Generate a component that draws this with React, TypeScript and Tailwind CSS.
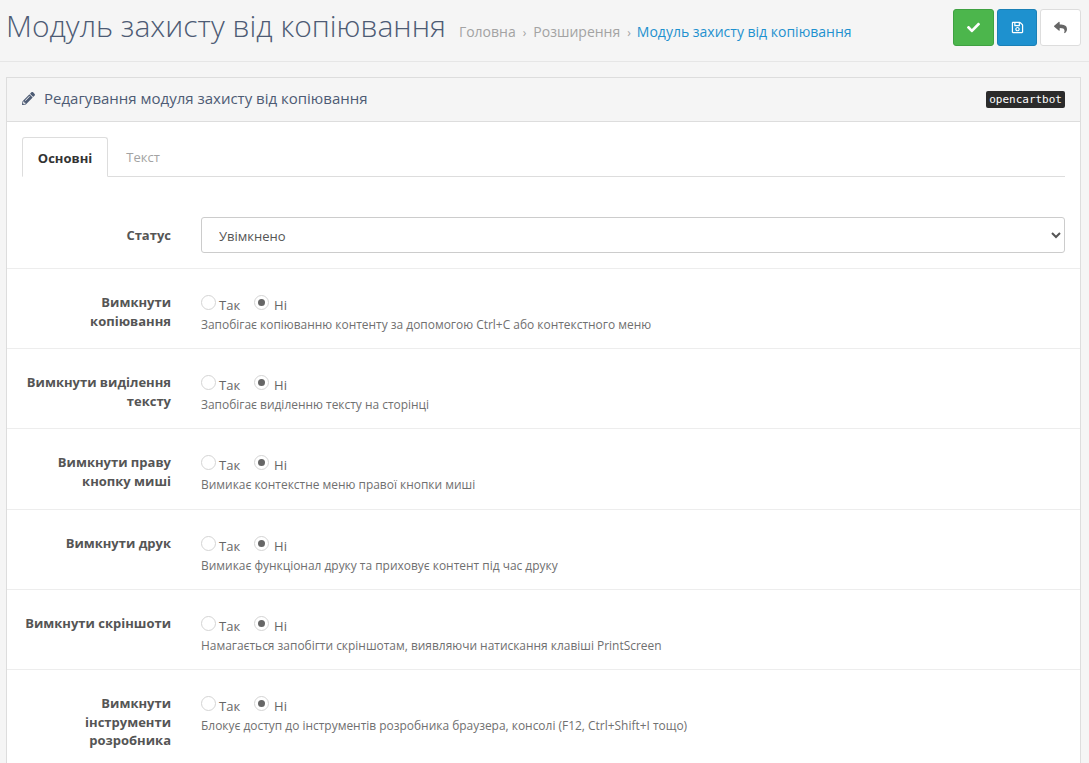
import React from 'react';
import { FaCheck, FaPencilAlt, FaRegSave, FaReply } from 'react-icons/fa';

const rows = [
    { label: ['Вимкнути', 'копіювання'], help: 'Запобігає копіюванню контенту за допомогою Ctrl+C або контекстного меню', h: 'h-[80px]' },
    { label: ['Вимкнути виділення', 'тексту'], help: 'Запобігає виділенню тексту на сторінці', h: 'h-[80px]' },
    { label: ['Вимкнути праву', 'кнопку миші'], help: 'Вимикає контекстне меню правої кнопки миші', h: 'h-[81px]' },
    { label: ['Вимкнути друк'], help: 'Вимикає функціонал друку та приховує контент під час друку', h: 'h-[80px]' },
    { label: ['Вимкнути скріншоти'], help: 'Намагається запобігти скріншотам, виявляючи натискання клавіші PrintScreen', h: 'h-[80px]' },
    { label: ['Вимкнути', 'інструменти', 'розробника'], help: 'Блокує доступ до інструментів розробника браузера, консолі (F12, Ctrl+Shift+I тощо)', h: 'h-[94px]' },
];

const Radio = ({ checked }: { checked?: boolean }) => (
    <span className="flex h-[15px] w-[15px] items-center justify-center rounded-full border border-[#d4d4d4] bg-white">
        {checked && <span className="h-[7px] w-[7px] rounded-full bg-[#666]"></span>}
    </span>
);

const App = () => {
    return (
        <div className="h-[763px] overflow-hidden bg-[#f5f5f5] font-['Open_Sans',sans-serif] text-[13px] text-[#666]">
            <div className="flex h-[62px] items-start justify-between border-b border-[#e6e6e6] pl-[6px] pr-[8px]">
                <div className="flex items-baseline">
                    <h1 className="text-[30px] leading-[51px] font-light text-[#4d5b74]">Модуль захисту від копіювання</h1>
                    <div className="ml-[13px] flex items-baseline text-[14px] text-[#a3a3a3]">
                        <span>Головна</span>
                        <span className="mx-[7px] text-[12px]">›</span>
                        <span>Розширення</span>
                        <span className="ml-[7px] mr-[6px] text-[12px]">›</span>
                        <span className="text-[#1e91cf]">Модуль захисту від копіювання</span>
                    </div>
                </div>
                <div className="mt-[9px] flex gap-[3px]">
                    <button className="flex h-[37px] w-[41px] items-center justify-center rounded-[3px] border border-[#3fa142] bg-[#4cb64c] text-[13px] text-white">
                        <FaCheck />
                    </button>
                    <button className="flex h-[37px] w-[40px] items-center justify-center rounded-[3px] border border-[#1a80b6] bg-[#1e91cf] text-[13px] text-white">
                        <FaRegSave />
                    </button>
                    <button className="flex h-[37px] w-[41px] items-center justify-center rounded-[3px] border border-[#ddd] bg-white text-[13px] text-[#666]">
                        <FaReply />
                    </button>
                </div>
            </div>
            <div className="ml-[6px] mr-[8px] mt-[15px] h-[700px] border border-[#ddd] bg-white">
                <div className="flex h-[44px] items-center justify-between border-b border-[#ddd] bg-[#f5f5f5] px-[15px]">
                    <div className="flex items-center pb-[3px] text-[15px] text-[#4d5b74]">
                        <FaPencilAlt className="mr-[9px] text-[13px]" />
                        <span>Редагування модуля захисту від копіювання</span>
                    </div>
                    <span className="rounded-[2px] bg-[#2b2b2b] px-[3px] font-['DejaVu_Sans_Mono',monospace] text-[11px] leading-[17px] text-white">opencartbot</span>
                </div>
                <div className="px-[15px] pt-[15px]">
                    <div className="flex h-[40px] border-b border-[#ddd]">
                        <div className="-mb-px flex h-[40px] w-[86px] items-center justify-center rounded-t-[3px] border border-[#ddd] border-b-white bg-white pt-[3px] font-bold text-[#333]">Основні</div>
                        <div className="flex w-[70px] items-center justify-center pt-[3px] text-[#a3a3a3]">Текст</div>
                    </div>
                </div>
                <div className="mt-[17px] flex h-[75px] items-start border-b border-[#ededed]">
                    <label className="mt-[32px] w-[164px] text-right font-bold text-[#555]">Статус</label>
                    <select defaultValue="on" className="ml-[30px] mt-[23px] h-[36px] w-[864px] rounded-[3px] border border-[#ccc] bg-white pl-[13px] pr-[6px] pt-[2px] text-[13px] text-[#555]">
                        <option value="on">Увімкнено</option>
                    </select>
                </div>
                {rows.map((row) => (
                    <div key={row.help} className={`flex items-start border-b border-[#ededed] pt-[24px] ${row.h}`}>
                        <div className="w-[164px] text-right text-[13px] leading-[18.5px] font-bold text-[#555]">
                            {row.label.map((line) => (
                                <div key={line}>{line}</div>
                            ))}
                        </div>
                        <div className="ml-[30px] -mt-px">
                            <div className="flex h-[20px] items-center">
                                <Radio />
                                <span className="ml-[3px] mt-[7px]">Так</span>
                                <span className="ml-[14px]"><Radio checked /></span>
                                <span className="ml-[5px] mt-[7px]">Ні</span>
                            </div>
                            <div className="mt-[4px] text-[11.95px] leading-[18px] text-[#707070]">{row.help}</div>
                        </div>
                    </div>
                ))}
            </div>
        </div>
    );
};

export default App;
